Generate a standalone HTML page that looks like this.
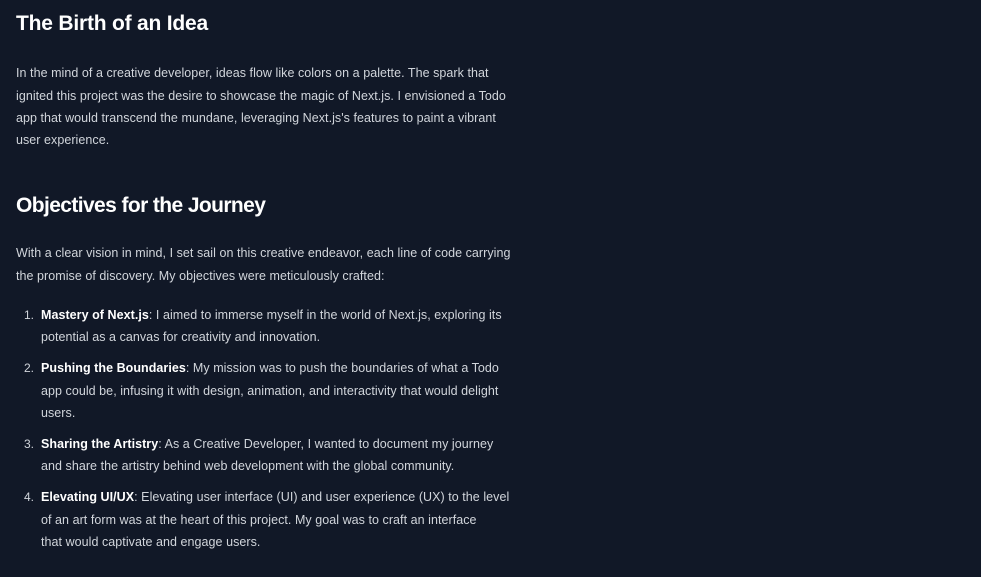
<!DOCTYPE html>
<html><head><meta charset="utf-8"><style>
html,body{margin:0;padding:0;background:#111827;width:981px;height:577px;overflow:hidden}
body{font-family:"Liberation Sans",sans-serif;color:#d1d5db;position:relative}
.l{position:absolute;white-space:nowrap;font-size:12.5px;line-height:22px;height:22px;letter-spacing:0.05px}
.h{position:absolute;white-space:nowrap;color:#fff;font-weight:bold;font-size:21px;line-height:30px;letter-spacing:-0.2px}
b{color:#fff}
.n{position:absolute;font-size:12px;line-height:22px;color:#d1d5db;width:34px;text-align:right}
</style></head><body>
<div class="h" style="left:16px;top:9px">The Birth of an Idea</div>
<div class="l" style="left:16px;top:62px">In the mind of a creative developer, ideas flow like colors on a palette. The spark that</div>
<div class="l" style="left:16px;top:85px">ignited this project was the desire to showcase the magic of Next.js. I envisioned a Todo</div>
<div class="l" style="left:16px;top:107px">app that would transcend the mundane, leveraging Next.js's features to paint a vibrant</div>
<div class="l" style="left:16px;top:129px">user experience.</div>
<div class="h" style="left:16px;top:191px;letter-spacing:-0.6px">Objectives for the Journey</div>
<div class="l" style="left:16px;top:242px">With a clear vision in mind, I set sail on this creative endeavor, each line of code carrying</div>
<div class="l" style="left:16px;top:265px">the promise of discovery. My objectives were meticulously crafted:</div>

<div class="n" style="left:0;top:304px">1.</div>
<div class="l" style="left:41px;top:304px"><b>Mastery of Next.js</b>: I aimed to immerse myself in the world of Next.js, exploring its</div>
<div class="l" style="left:41px;top:326px">potential as a canvas for creativity and innovation.</div>

<div class="n" style="left:0;top:357px">2.</div>
<div class="l" style="left:41px;top:357px"><b>Pushing the Boundaries</b>: My mission was to push the boundaries of what a Todo</div>
<div class="l" style="left:41px;top:380px">app could be, infusing it with design, animation, and interactivity that would delight</div>
<div class="l" style="left:41px;top:402px">users.</div>

<div class="n" style="left:0;top:433px">3.</div>
<div class="l" style="left:41px;top:433px"><b>Sharing the Artistry</b>: As a Creative Developer, I wanted to document my journey</div>
<div class="l" style="left:41px;top:455px">and share the artistry behind web development with the global community.</div>

<div class="n" style="left:0;top:486px">4.</div>
<div class="l" style="left:41px;top:486px"><b>Elevating UI/UX</b>: Elevating user interface (UI) and user experience (UX) to the level</div>
<div class="l" style="left:41px;top:509px">of an art form was at the heart of this project. My goal was to craft an interface</div>
<div class="l" style="left:41px;top:531px">that would captivate and engage users.</div>
</body></html>
